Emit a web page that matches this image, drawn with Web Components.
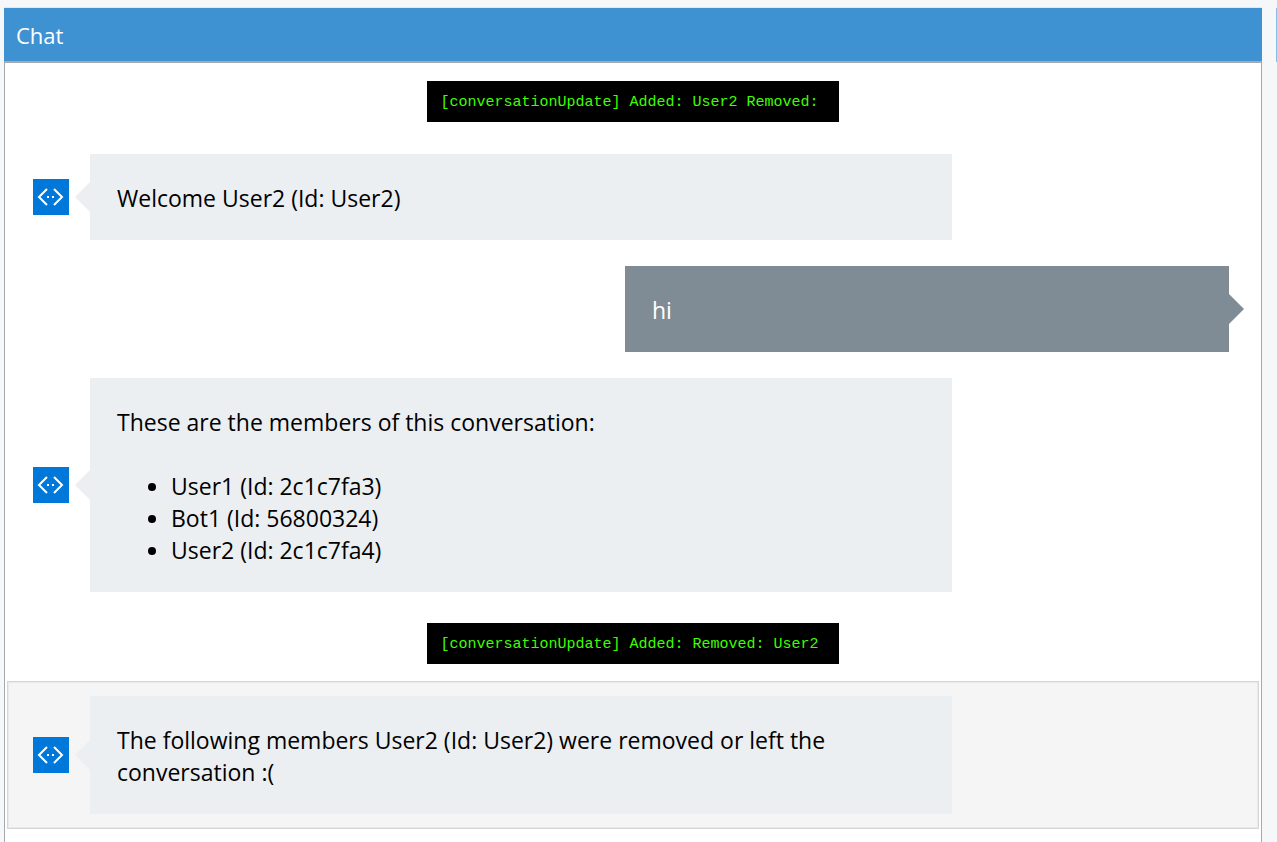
<!DOCTYPE html>
<html lang="en">
<head>
<meta charset="utf-8">
<title>Chat</title>
<style>
html { height: 100%; }
body { margin: 0; min-height: 100%; display: flex; background: #f5f7f9; font-family: "Segoe UI", "Open Sans", sans-serif; }
</style>
</head>
<body>
<chat-workspace>
  <chat-panel heading="Chat">
    <chat-log>[conversationUpdate] Added: User2 Removed:</chat-log>
    <chat-message from="bot"><p>Welcome User2 (Id: User2)</p></chat-message>
    <chat-message from="user"><p>hi</p></chat-message>
    <chat-message from="bot">
      <p>These are the members of this conversation:</p>
      <ul>
        <li>User1 (Id: 2c1c7fa3)</li>
        <li>Bot1 (Id: 56800324)</li>
        <li>User2 (Id: 2c1c7fa4)</li>
      </ul>
    </chat-message>
    <chat-log>[conversationUpdate] Added: Removed: User2</chat-log>
    <chat-message from="bot" selected><p>The following members User2 (Id: User2) were removed or left the conversation :(</p></chat-message>
  </chat-panel>
</chat-workspace>
<script>
class BaseElement extends HTMLElement {
  constructor() {
    super();
    this.attachShadow({ mode: 'open' }).innerHTML = this.constructor.markup;
  }
}

class ChatWorkspace extends BaseElement {
  static markup = `
    <style>
      :host { flex: 1; min-width: 0; display: grid; grid-template-columns: minmax(0, 1fr) 1px; column-gap: 14px; padding: 8px 0 0 4px; box-sizing: border-box; }
      .next { background: linear-gradient(#8bbde3 54px, #f5f7f9 54px); }
    </style>
    <slot></slot><div class="next"></div>`;
}

class ChatPanel extends BaseElement {
  static markup = `
    <style>
      :host { display: flex; flex-direction: column; min-width: 0; box-shadow: 0 -1px #e4e8ec; }
      header { background: #3f92d2; color: #fff; padding: 13px 12px 11px; }
      h1 { margin: 0; font-size: 22px; line-height: 29px; font-weight: 400; }
      main { flex: 1; background: #fff; border: 1px solid #a6aab0; border-top: 2px solid #a6aab0; border-bottom: 0; padding: 0 4px; }
    </style>
    <header><h1></h1></header>
    <main><slot></slot></main>`;
  connectedCallback() {
    this.shadowRoot.querySelector('h1').textContent = this.getAttribute('heading');
  }
}

class ChatLog extends BaseElement {
  static markup = `
    <style>
      :host { display: flex; justify-content: center; padding: 18px 0 19px; }
      output { background: #000; color: #3cff00; font: 15px/17px "Liberation Mono", monospace; padding: 13px 20px 11px 13px; white-space: pre; }
    </style>
    <output><slot></slot></output>`;
}

class ChatMessage extends BaseElement {
  static markup = `
    <style>
      :host { display: flex; align-items: center; gap: 21px; padding: 13px 28px 13px 24px; font-size: 23px; line-height: 32px; --bubble: #ebeff2; color: #000; }
      :host([from=user]) { justify-content: flex-end; --bubble: #808c95; color: #fff; }
      :host([selected]) { background: #f5f5f5; box-shadow: 0 0 0 1px #e9e9e9, 0 0 0 2px #d6d6d6; }
      svg { flex: none; width: 36px; height: 36px; }
      :host([from=user]) svg { display: none; }
      .bubble { position: relative; box-sizing: border-box; flex: none; width: calc(72% + 1px); padding: 28px 27px 26px; background: var(--bubble); }
      :host([from=user]) .bubble { width: calc(50% + 6px); }
      .bubble::before { content: ""; position: absolute; top: calc(50% - 15px); right: 100%; border: 15px solid transparent; border-right-color: var(--bubble); border-left: 0; }
      :host([from=user]) .bubble::before { right: auto; left: 100%; border: 15px solid transparent; border-left-color: var(--bubble); border-right: 0; }
      ::slotted(p) { margin: 0; }
      ::slotted(ul) { margin: 32px 0 0; padding-left: 54px; }
    </style>
    <svg viewBox="0 0 36 36" aria-hidden="true">
      <path fill="#0078d9" d="M0 0h36v36H0z"/>
      <path fill="none" stroke="#fff" stroke-width="2" d="M14 10l-8 8 8 8M21 10l8 8-8 8"/>
      <path fill="#fff" d="M14 17h2v2h-2zM19 17h2v2h-2z"/>
    </svg>
    <div class="bubble"><slot></slot></div>`;
}

customElements.define('chat-workspace', ChatWorkspace);
customElements.define('chat-panel', ChatPanel);
customElements.define('chat-log', ChatLog);
customElements.define('chat-message', ChatMessage);
</script>
</body>
</html>
